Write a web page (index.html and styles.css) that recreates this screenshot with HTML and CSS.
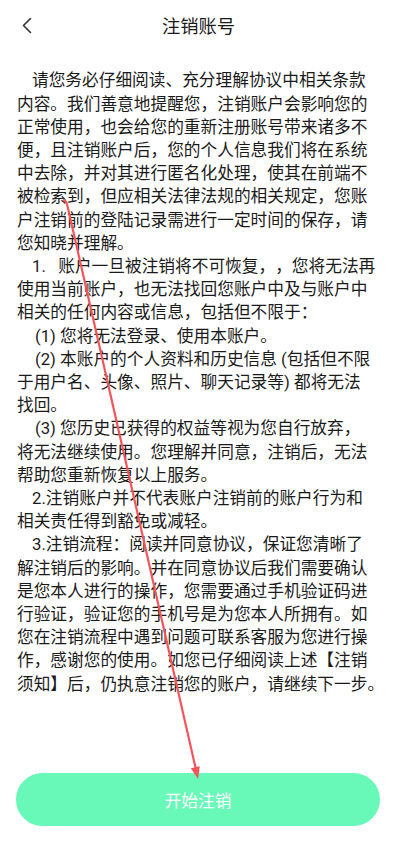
FILE: index.html
```html
<!DOCTYPE html>
<html lang="zh-CN">
<head>
<meta charset="utf-8">
<title>注销账号</title>
<link rel="stylesheet" href="styles.css">
</head>
<body>
<div class="page">
  <header class="header">
    <svg class="back" width="16" height="20" viewBox="0 0 16 20"><path d="M10.5 2.5 L3.5 9.5 L10.5 16.5" fill="none" stroke="#333" stroke-width="1.6" stroke-linecap="round" stroke-linejoin="round"/></svg>
    <h1 class="title">注销账号</h1>
  </header>
  <main class="content">
    <p class="para">请您务必仔细阅读、充分理解协议中相关条款<br>内容。我们善意地提醒您，注销账户会影响您的<br>正常使用，也会给您的重新注册账号带来诸多不<br>便，且注销账户后，您的个人信息我们将在系统<br>中去除，并对其进行匿名化处理，使其在前端不<br>被检索到，但应相关法律法规的相关规定，您账<br>户注销前的登陆记录需进行一定时间的保存，请<br>您知晓并理解。</p>
    <p class="para">1.&nbsp;&nbsp;&nbsp;账户一旦被注销将不可恢复，，您将无法再<br>使用当前账户，也无法找回您账户中及与账户中<br>相关的任何内容或信息，包括但不限于：</p>
    <p class="para sub">(1) 您将无法登录、使用本账户。</p>
    <p class="para sub">(2) 本账户的个人资料和历史信息 (包括但不限<br>于用户名、头像、照片、聊天记录等) 都将无法<br>找回。</p>
    <p class="para sub">(3) 您历史已获得的权益等视为您自行放弃，<br>将无法继续使用。您理解并同意，注销后，无法<br>帮助您重新恢复以上服务。</p>
    <p class="para">2.注销账户并不代表账户注销前的账户行为和<br>相关责任得到豁免或减轻。</p>
    <p class="para">3.注销流程：阅读并同意协议，保证您清晰了<br>解注销后的影响。并在同意协议后我们需要确认<br>是您本人进行的操作，您需要通过手机验证码进<br>行验证，验证您的手机号是为您本人所拥有。如<br>您在注销流程中遇到问题可联系客服为您进行操<br>作，感谢您的使用。如您已仔细阅读上述【注销<br>须知】后，仍执意注销您的账户，请继续下一步。</p>
  </main>
  <footer class="footer">
    <button class="btn" type="button">开始注销</button>
  </footer>
  <svg class="annot" width="397" height="841" viewBox="0 0 397 841">
    <path d="M64 200 Q66.5 201.5 67 204 L195.6 768" fill="none" stroke="#f5555a" stroke-width="2.2" stroke-linecap="round"/>
    <polygon points="198,779 190.8,768.2 199.8,766.2" fill="#f5555a"/>
  </svg>
</div>
</body>
</html>
```

FILE: styles.css
```css
* { box-sizing: border-box; }
html, body { margin: 0; padding: 0; background: #fff; }
body {
  font-family: Roboto, "Noto Sans CJK SC", sans-serif;
  color: #1a1a1a;
  text-spacing-trim: space-all;
}
.page {
  position: relative;
  width: 397px;
  height: 841px;
  display: flex;
  flex-direction: column;
  overflow: hidden;
}
.header {
  position: relative;
  height: 54px;
  display: flex;
  align-items: center;
  justify-content: center;
}
.back {
  position: absolute;
  left: 20px;
  top: 16px;
}
.title {
  margin: 0;
  font-size: 18.3px;
  font-weight: 400;
  color: #1a1a1a;
  line-height: 1;
}
.content {
  padding: 15.4px 17px 0 17px;
  width: 380px;
}
.para {
  margin: 0;
  font-size: 16.7px;
  line-height: 23.2px;
  text-indent: 15px;
  white-space: nowrap;
  text-spacing-trim: space-all;
}
.sub { text-indent: 18px; }
.footer {
  margin-top: auto;
  padding: 0 17px 15px 16px;
}
.btn {
  display: block;
  width: 364px;
  height: 53px;
  border: none;
  border-radius: 27px;
  background: #68f8b8;
  color: #fff;
  font-family: Roboto, "Noto Sans CJK SC", sans-serif;
  font-size: 16.7px;
  padding: 0;
}
.annot {
  position: absolute;
  left: 0;
  top: 0;
  pointer-events: none;
}
```
